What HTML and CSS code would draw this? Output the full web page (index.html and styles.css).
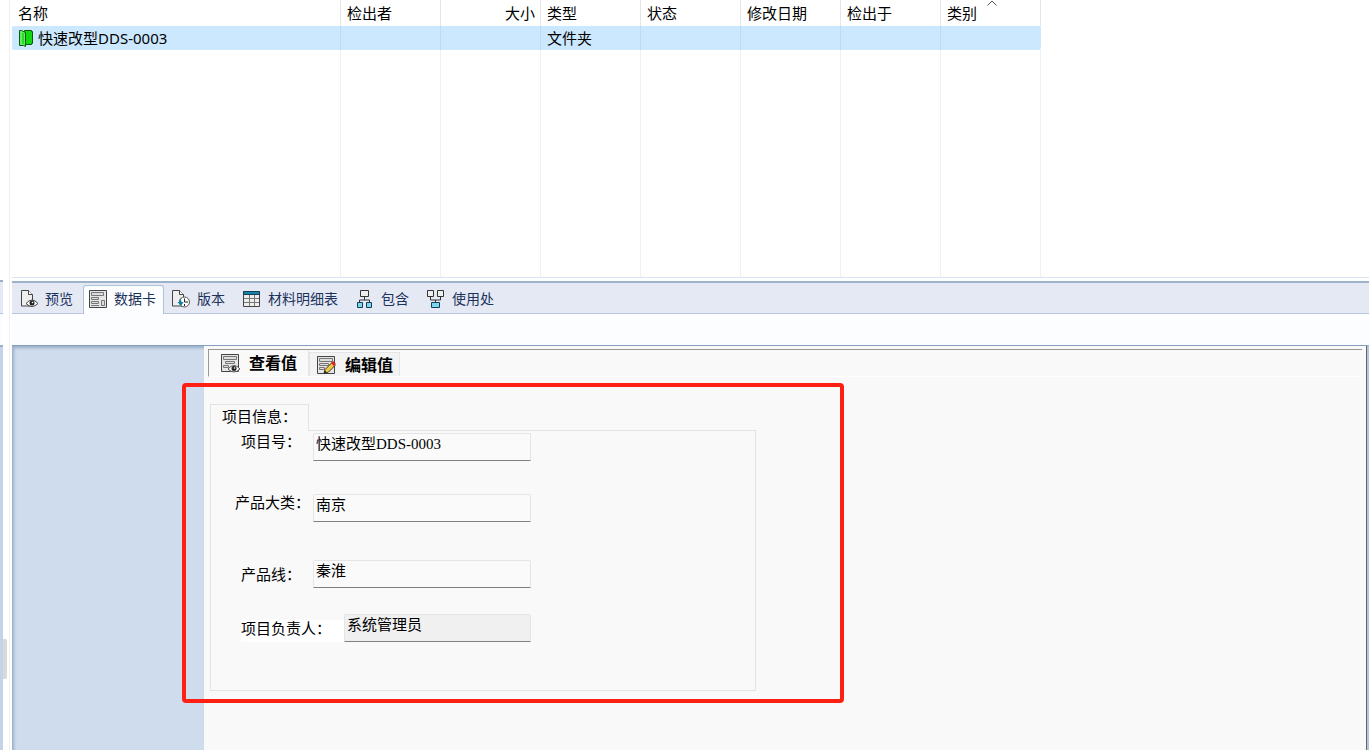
FILE: index.html
```html
<!DOCTYPE html>
<html lang="zh-CN">

<head>
	<meta charset="UTF-8">
	<meta name="viewport" content="width=device-width, initial-scale=1.0">
	<title>快速改型DDS-0003</title>
	<link rel="stylesheet" href="styles.css">
</head>

<body>
	<div class="rail">
		<div class="rail__top"></div>
		<div class="rail__tabs"></div>
		<div class="rail__band"></div>
		<div class="rail__tree"></div>
		<div class="rail__handle"></div>
	</div>

	<main class="main">
		<section class="files">
			<table class="files__table">
				<thead>
					<tr>
						<th class="files__name">名称</th>
						<th>检出者</th>
						<th class="right">大小</th>
						<th>类型</th>
						<th>状态</th>
						<th>修改日期</th>
						<th>检出于</th>
						<th class="sorted">类别
							<svg class="sort" width="10" height="6" viewBox="0 0 10 6"><path d="M.5 5.500 5 1l4.500 4.500" fill="none" stroke="#555"/></svg>
						</th>
					</tr>
				</thead>
				<tbody>
					<tr class="selected">
						<td>
							<span class="file">
								<svg width="16" height="18" viewBox="0 0 16 18">
									<path d="M6.500 1.500h7v1h1v12h-1v1h-7z" fill="#12d812" stroke="#075a07"/>
									<path d="M1.500 1.500h2l4 2v14l-2-1H1.500z" fill="#62ee62" stroke="#075a07"/>
									<path d="M5 4v11" stroke="#2bd92b" stroke-width="2"/>
								</svg>
								快速改型DDS-0003
							</span>
						</td>
						<td></td>
						<td></td>
						<td>文件夹</td>
						<td></td>
						<td></td>
						<td></td>
						<td></td>
					</tr>
					<tr class="filler"><td></td><td></td><td></td><td></td><td></td><td></td><td></td><td></td></tr>
				</tbody>
			</table>
		</section>

		<nav class="tabs">
			<button class="tab">
				<svg width="18" height="18" viewBox="0 0 18 18">
					<path d="M1.500.5h7l4 4v11.500h-11z" fill="#eee" stroke="#444"/>
					<path d="M8.500.5v4h4" fill="#fff" stroke="#444"/>
					<path d="M6 13.500q6-7 12 0-6 6-12 0z" fill="#fff" stroke="#444"/>
					<circle cx="12" cy="13" r="2.500" fill="#222"/>
					<circle cx="12.500" cy="12.500" r=".8" fill="#fff"/>
				</svg>
				预览
			</button>
			<button class="tab tab_active">
				<svg width="18" height="18" viewBox="0 0 18 18">
					<path d="M.5.500h17v17H.5z" fill="#e6e6e6" stroke="#444" />
					<path d="M2.500 2.500h12v3h-12zM2.500 7.500h7v2h-7zM2.500 11.500h7v2h-7zM12.500 10.500h3v5h-3z" fill="#ddd" stroke="#777"/>
					<path d="M2 15.500h8" stroke="#777"/>
				</svg>
				数据卡
			</button>
			<button class="tab">
				<svg width="18" height="18" viewBox="0 0 18 18">
					<path d="M.5.5h7l4 4v11.500H.5z" fill="#eee" stroke="#444"/>
					<path d="M7.500.5v4h4" fill="#fff" stroke="#444"/>
					<circle cx="12.500" cy="12" r="5" fill="#fff" stroke="#555"/>
					<path d="M12.500 8.500V12H16M12.500 14v2" fill="none" stroke="#222"/>
					<path d="M9 7.500q-2 2-1.500 4.500H5.500l3.500 4 2.500-4H9.500q-1-2-.5-4.500z" fill="#147e9f"/>
				</svg>
				版本
			</button>
			<button class="tab">
				<svg width="18" height="18" viewBox="0 0 18 18">
					<path d="M.5 1.500h16v15H.5z" fill="#eee" stroke="#444"/>
					<path d="M.5 1.500h16v3H.5z" fill="#1683a8" stroke="#143f56"/>
					<path d="M1 8.500h15M1 12.500h15M6.500 5v11M11.500 5v11" stroke="#777"/>
				</svg>
				材料明细表
			</button>
			<button class="tab">
				<svg width="18" height="18" viewBox="0 0 18 18">
					<path d="M8.500 7v3M3.500 13v-3h10v3" fill="none" stroke="#333"/>
					<path d="M4.500.5h8v6h-8z" fill="#eee" stroke="#333"/>
					<path d="M1.500 12.500h5v5h-5zM10.500 12.500h5v5h-5z" fill="#7fd5ee" stroke="#143f56"/>
				</svg>
				包含
			</button>
			<button class="tab">
				<svg width="18" height="18" viewBox="0 0 18 18">
					<path d="M3.500 7v3h10V7M8.500 10v3" fill="none" stroke="#333"/>
					<path d="M.5.5h6v6h-6zM10.500.5h6v6h-6z" fill="#eee" stroke="#333"/>
					<path d="M4.500 12.500h8v5h-8z" fill="#7fd5ee" stroke="#143f56"/>
				</svg>
				使用处
			</button>
		</nav>
		<div class="band"></div>

		<section class="viewer">
			<aside class="viewer__side"></aside>
			<div class="card">
				<div class="modes">
					<button class="mode mode_active">
						<svg width="20" height="20" viewBox="0 0 20 20">
							<path d="M1.500 1.500h17v17h-17z" fill="#e6e6e6" stroke="#444"/>
							<path d="M3.500 3.500h13v3h-13zM5.500 8.500h9v2h-9zM3.500 12.500h5v2h-5z" fill="#ddd" stroke="#777"/>
							<path d="M8 16q6-7 12 0-6 6-12 0z" fill="#fff" stroke="#555"/>
							<circle cx="14" cy="15.500" r="2.500" fill="#222"/>
							<circle cx="14.500" cy="15" r=".8" fill="#fff"/>
						</svg>
						查看值
					</button>
					<button class="mode">
						<svg width="20" height="20" viewBox="0 0 20 20">
							<path d="M1.500 1.500h17v17h-17z" fill="#e6e6e6" stroke="#444"/>
							<path d="M3.500 3.500h13v3h-13zM3.500 8.500h9v2h-9zM3.500 12.500h5v2h-5z" fill="#ddd" stroke="#777"/>
							<path d="M8 18.500l1-4 7-7 3 3-7 7z" fill="#f4c842" stroke="#333"/>
							<path d="M8 18.500l1-3 2 2z" fill="#222"/>
							<path d="M16 7l3 3" stroke="#d22" stroke-width="3"/>
						</svg>
						编辑值
					</button>
				</div>

				<form class="project">
					<div class="project__tab">项目信息：</div>
					<div class="project__body">
						<div class="field">
							<label for="number">项目号：</label>
							<input id="number" type="text" value="快速改型DDS-0003" readonly>
						</div>
						<div class="field field_wide">
							<label for="category">产品大类：</label>
							<input id="category" type="text" value="南京" readonly>
						</div>
						<div class="field field_line">
							<label for="line">产品线：</label>
							<input id="line" type="text" value="秦淮" readonly>
						</div>
						<div class="field field_owner">
							<label for="owner">项目负责人：</label>
							<input id="owner" type="text" value="系统管理员" readonly>
						</div>
					</div>
				</form>
				<div class="mark"></div>
			</div>
		</section>
	</main>
</body>

</html>
```

FILE: styles.css
```css
* {
	box-sizing: border-box;
}

body {
	margin: 0;
	display: flex;
	min-height: 100vh;
	background: #fff;
	color: #000;
	font: 15px/20px "Noto Sans", "Noto Sans CJK SC", sans-serif;
}

button,
input {
	font: inherit;
	color: inherit;
}

svg {
	flex: none;
}

/* strip of the neighbouring pane */
.rail {
	position: relative;
	flex: none;
	width: 10px;
	margin-right: 2px;
	border-right: 1px solid #f0f0f0;
	display: flex;
	flex-direction: column;
}

.rail__top {
	height: 280px;
}

.rail__tabs,
.rail__band,
.rail__tree {
	width: 3px;
	border-top: 2px solid #9cb0c8;
}

.rail__tabs {
	height: 33px;
	background: #e5e9f4;
}

.rail__band {
	height: 32px;
	border-top: 1px solid #b8c6e0;
	background: #fcfdff;
}

.rail__tree {
	flex: 1;
	background: #c3d3e8;
}

.rail__handle {
	position: absolute;
	left: 3px;
	top: 639px;
	width: 4px;
	height: 40px;
	background: #d9d9d9;
	border-radius: 0 2px 2px 0;
}

.main {
	flex: 1;
	min-width: 0;
	display: flex;
	flex-direction: column;
}

.files {
	height: 278px;
	border-bottom: 1px solid #d8e6f4;
}

.files__table {
	width: 1029px;
	height: 277px;
	table-layout: fixed;
	border-collapse: separate;
	border-spacing: 0;
}

.files th,
.files td {
	padding: 0 6px;
	border-right: 1px solid #e8f2fc;
	text-align: left;
	font-weight: normal;
	white-space: nowrap;
}

.files th {
	width: 100px;
	height: 26px;
	border-color: #e5e5e5;
}

.files .files__name {
	width: 329px;
}

.files .right {
	text-align: right;
	padding-right: 5px;
}

.sorted {
	position: relative;
}

.sort {
	position: absolute;
	left: 46px;
	top: 0;
}

.files .selected td {
	height: 24px;
	background: #cce8ff;
	border-color: #b9dcfb;
}

.files .selected td:first-child {
	border-radius: 2px 0 0 2px;
}

.files .selected td:last-child {
	border-color: #cce8ff;
	border-radius: 0 2px 2px 0;
}

.file {
	display: flex;
	align-items: center;
	gap: 4px;
}

.tabs {
	display: flex;
	align-items: flex-end;
	height: 33px;
	margin-top: 3px;
	border-top: 2px solid #9cb3c9;
	background: #e5e9f4;
	box-shadow: inset 0 -1px #b8c6e0;
	color: #1c335c;
}

.tab {
	display: flex;
	align-items: center;
	gap: 7px;
	height: 29px;
	padding: 0 10px 2px 8px;
	border: 0;
	background: none;
	font-size: 14px;
	white-space: nowrap;
}

.tab_active {
	padding: 0 7px 2px 5px;
	border: 1px solid #b0c1dc;
	border-bottom: 0;
	border-radius: 3px 3px 0 0;
	background: #fcfdff;
}

.band {
	height: 31px;
	background: #fcfdff;
}

.viewer {
	flex: 1;
	display: flex;
	border-top: 1px solid #849fbe;
	border-right: 2px solid #b4c6de;
}

.viewer__side {
	width: 192px;
	background: #cfdced;
	box-shadow: inset 2px 2px 3px #9aafc8;
}

.card {
	position: relative;
	flex: 1;
	padding: 3px 4px;
	border-right: 1px solid #666;
	background: #f9f9f9;
}

.modes {
	display: flex;
	align-items: flex-end;
	height: 28px;
	border-top: 1px solid #999;
	border-left: 1px solid #999;
	border-bottom: 1px solid #fff;
}

.mode {
	display: flex;
	align-items: center;
	gap: 9px;
	height: 24px;
	padding: 0 6px;
	border: 1px solid #e5e5e5;
	border-bottom: 0;
	background: #f3f3f3;
	font-weight: bold;
	font-size: 16px;
}

.mode_active {
	height: 26px;
	padding: 0 11px;
	border-width: 0 1px 0 0;
	background: #f9f9f9;
}

.project {
	width: 546px;
	margin: 27px 0 0 2px;
}

.project__tab {
	width: 99px;
	height: 27px;
	margin-bottom: -1px;
	padding: 1px 11px;
	position: relative;
	border: 1px solid #e3e3e3;
	border-bottom: 0;
	background: #f9f9f9;
	white-space: nowrap;
}

.project__body {
	height: 261px;
	padding: 2px 0 0 24px;
	border: 1px solid #e3e3e3;
}

.field {
	display: flex;
	width: 296px;
	height: 28px;
	margin-bottom: 33px;
}

.field label {
	flex: none;
	width: 78px;
	padding-left: 6px;
	line-height: 16px;
	white-space: nowrap;
}

.field input {
	flex: 1;
	min-width: 0;
	height: 28px;
	padding: 0 2px 10px;
	border: 1px solid #e5e5e5;
	border-bottom-color: #808080;
	border-radius: 2px 2px 0 0;
	outline: 0;
	background: #fafafa;
	font-family: "Liberation Serif", "Noto Sans CJK SC", serif;
	line-height: 16px;
}

.field_wide {
	margin-bottom: 38px;
}

.field_wide label {
	padding-left: 0;
}

.field_line {
	align-items: center;
	margin-bottom: 26px;
}

.field_owner {
	align-items: flex-end;
}

.field_owner label {
	width: 103px;
	height: 22px;
	margin-left: 6px;
	padding-left: 0;
	background: #fff;
}

.field_owner input {
	background: #f0f0f0;
}

/* red frame over the form */
.mark {
	position: absolute;
	left: -22px;
	top: 37px;
	width: 662px;
	height: 320px;
	border: 4px solid #ff2014;
	border-radius: 4px;
	pointer-events: none;
}
```
